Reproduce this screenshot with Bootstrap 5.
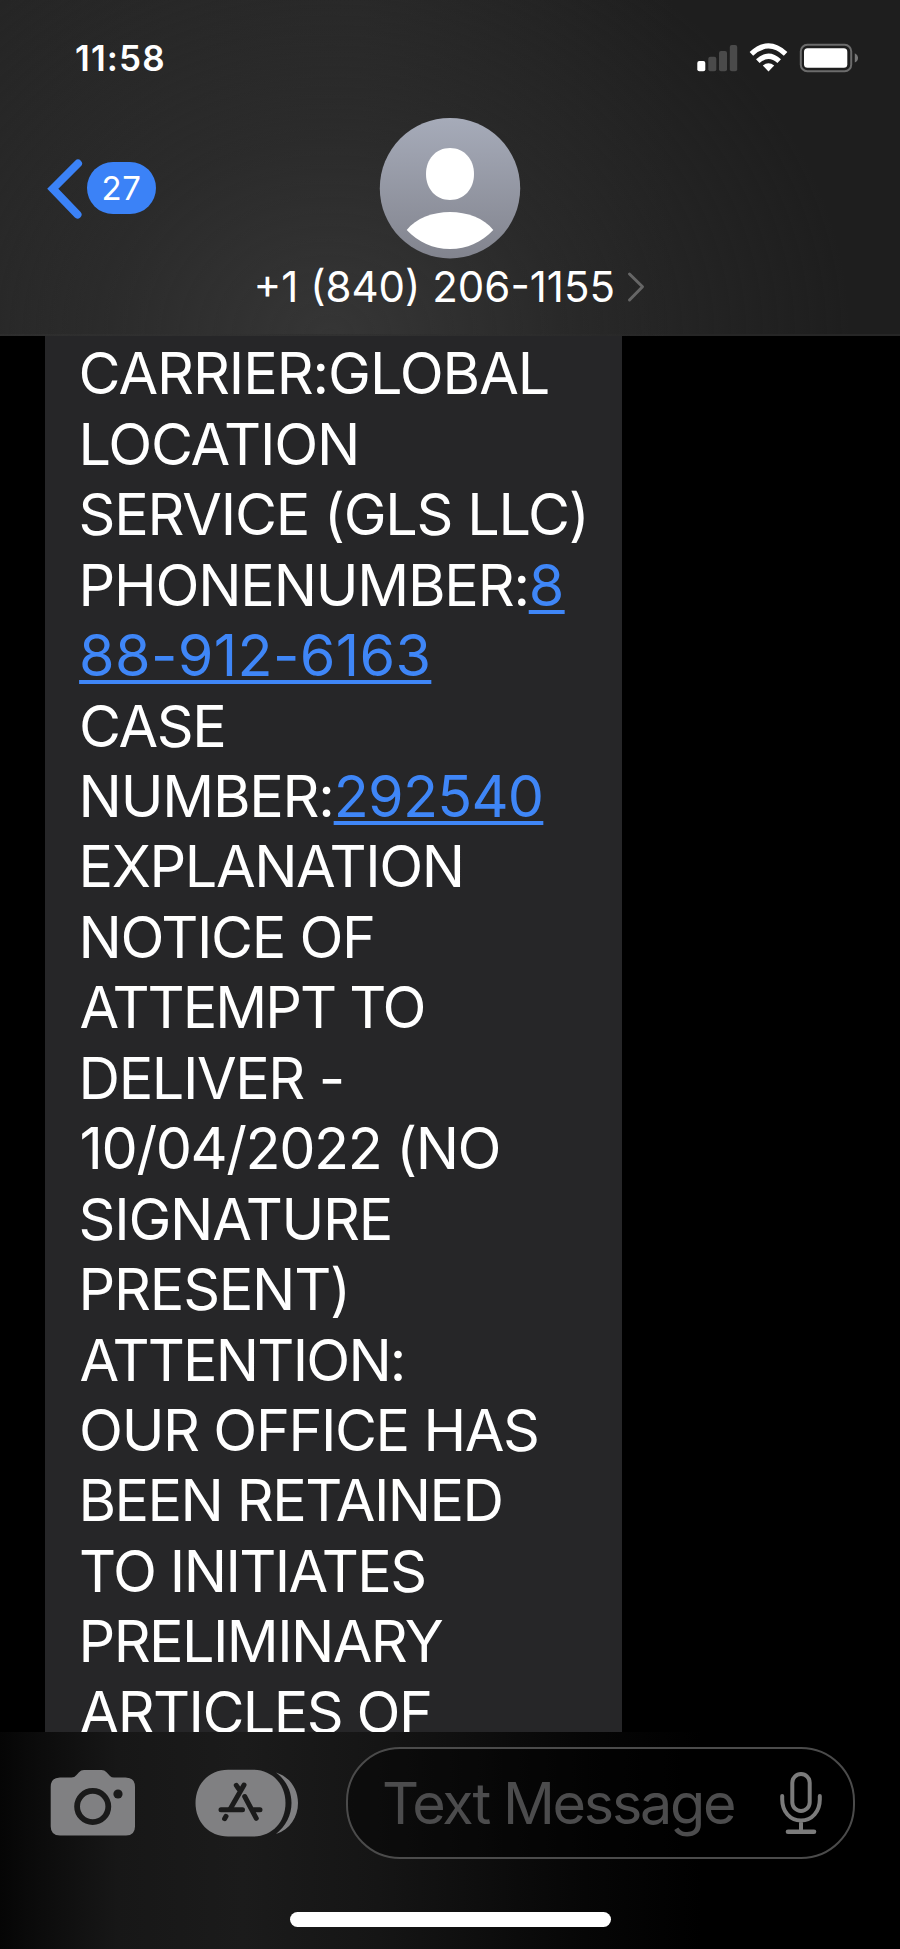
<!DOCTYPE html>
<html lang="en">
<head>
<meta charset="utf-8">
<meta name="viewport" content="width=device-width, initial-scale=1">
<title>Messages</title>
<link href="https://cdn.jsdelivr.net/npm/bootstrap@5.3.0/dist/css/bootstrap.min.css" rel="stylesheet">
<style>
  body { background: #000; color: #fff; font-family: Inter, "Liberation Sans", sans-serif; }
  .phone { width: 900px; height: 1949px; }
  svg { display: block; flex: none; }

  .top-bar {
    height: 336px;
    border-bottom: 2px solid rgba(255,255,255,.04);
    background:
      radial-gradient(ellipse 520px 440px at 330px 336px, rgba(54,54,54,.95), rgba(46,46,46,.6) 45%, rgba(30,30,30,0) 100%),
      linear-gradient(90deg, #252525, #272727 40%, #1e1e1e 75%, #1e1e1e);
  }
  .status-row { height: 117px; padding: 0 42px 2px 75px; }
  .clock { font-size: 35px; font-weight: 600; line-height: 42px; letter-spacing: 1.1px; }
  .head-grid { display: grid; grid-template-columns: 1fr 142px 1fr; height: 142px; padding: 0 45px; }
  .unread { width: 69px; height: 52px; border-radius: 26px; background: #3b82f7; font-size: 33px; line-height: 52px; letter-spacing: .6px; margin-left: 4px; }
  .contact { height: 56px; font-size: 42px; line-height: 56px; padding-left: 253.5px; }

  .thread { height: 1396px; }
  .bubble { width: 577px; margin-left: 45px; padding: 2.4px 0 0 33.6px; background: #262628; }
  .bubble p { font-size: 57.5px; line-height: 70.44px; letter-spacing: -1.25px; white-space: nowrap; margin: 0; }
  .bubble a { color: #3f86f7; letter-spacing: .35px; text-decoration: underline; text-decoration-thickness: 4px; text-underline-offset: 4px; text-decoration-skip-ink: none; }
  .bubble .t0 { letter-spacing: -1.08px; }
  .bubble .t1 { letter-spacing: -1.42px; }
  .bubble .t2 { letter-spacing: -1.6px; }
  .bubble .t3 { letter-spacing: -1.83px; }
  .bubble .t4 { letter-spacing: -1.99px; }
  .bubble .case-no { letter-spacing: -.75px; }
  .in1 { padding-left: .5px; }
  .in15 { padding-left: 1px; }

  .bottom-bar { height: 217px; background: linear-gradient(90deg, #050505, #0b0b0b 4%, #171717 13%, #1b1b1b 27%, #151515 42%, #0e0e0e 53%, #060606 65%, #000 78%); }
  .compose-row { height: 142px; padding: 0 45px 0 50px; }
  .app-icon { margin-left: 58px; }
  .field { width: 509.5px; height: 112px; border: 2.5px solid #4b4b4b; border-radius: 54px; background: rgba(0,0,0,.42); padding: 0 30px 0 34.5px; }
  .hint { color: #4c4c4d; font-size: 57.5px; line-height: 70px; letter-spacing: -2.28px; white-space: nowrap; }
  .home-line { width: 321px; height: 14.5px; border-radius: 8px; background: #fff; margin-top: 38px; margin-left: 290px; }
</style>
</head>
<body>
<div class="phone d-flex flex-column overflow-hidden">
  <header class="top-bar flex-shrink-0">
    <div class="status-row d-flex align-items-center justify-content-between">
      <span class="clock">11:58</span>
      <svg width="162" height="32" viewBox="696 41 162 32">
        <rect x="697.3" y="60" width="8" height="10.3" rx="2" fill="#fff"/>
        <g fill="#4a4a4a"><rect x="708.3" y="55.7" width="8" height="14.6" rx="2"/><rect x="719" y="50" width="8" height="20.3" rx="2"/><rect x="729.8" y="44" width="7.4" height="26.3" rx="2"/></g>
        <g fill="none" stroke="#fff" stroke-width="5.2">
          <path d="M751.4 52.8 Q768.5 37 785.600 52.8"/>
          <path d="M757.8 60.2 Q768.5 50.3 779.2 60.2"/>
        </g>
        <path d="M762.8 64.6 Q768.5 59.8 774.2 64.6 L768.5 70.4Z" fill="#fff"/>
        <rect x="800.8" y="43.8" width="50.4" height="26.4" rx="6.5" fill="none" stroke="#6c6c6c" stroke-width="2"/>
        <rect x="804" y="47.3" width="43.3" height="19.4" rx="3.5" fill="#fff"/>
        <path d="M854.8 52.3 Q858.2 54 858 57 Q858 60 854.8 61.6Z" fill="#777"/>
      </svg>
    </div>
    <div class="head-grid">
      <div class="d-flex align-items-center">
        <svg width="38" height="62" viewBox="45 157 38 62"><path d="M78 163.5 L52.8 188.7 L77.5 214.5" fill="none" stroke="#3b82f7" stroke-width="8" stroke-linecap="round" stroke-linejoin="miter"/></svg>
        <div class="unread text-center">27</div>
      </div>
      <svg width="142" height="142" viewBox="379 117 142 142">
        <defs><linearGradient id="avatarFill" x1="0" y1="0" x2="0" y2="1"><stop offset="0" stop-color="#a6abb9"/><stop offset="1" stop-color="#82848e"/></linearGradient></defs>
        <circle cx="450" cy="188.2" r="70.2" fill="url(#avatarFill)"/>
        <path d="M450 148C464 148 474 159 474 174S464 200 450 200S426 189 426 174S436 148 450 148Z" fill="#fff"/>
        <path d="M406.700 230 C416 218 433 212 450 212 S484 218 493.300 230 C482 242 467 249 450 249 S418 242 406.700 230Z" fill="#fff"/>
      </svg>
    </div>
    <div class="contact d-flex align-items-center">
      <span>+1 (840) 206-1155</span>
      <svg class="ms-2" width="28" height="34" viewBox="623 270 28 34"><path d="M629.500 274 L642.500 286.800 L629.500 300" fill="none" stroke="#666" stroke-width="3" stroke-linecap="round" stroke-linejoin="round"/></svg>
    </div>
  </header>

  <main class="thread overflow-hidden flex-shrink-0">
    <div class="bubble h-100 overflow-hidden">
      <p class="t0">CARRIER:GLOBAL</p>
      <p>LOCATION</p>
      <p>SERVICE (GLS LLC)</p>
      <p>PHONENUMBER:<a href="#">8</a></p>
      <p class="in1"><a href="#">88-912-6163</a></p>
      <p class="t1 in1">CASE</p>
      <p>NUMBER:<a class="case-no" href="#">292540</a></p>
      <p class="t1">EXPLANATION</p>
      <p class="t1">NOTICE OF</p>
      <p class="t4 in15">ATTEMPT TO</p>
      <p class="t1">DELIVER -</p>
      <p class="t1 in15">10/04/2022 (NO</p>
      <p>SIGNATURE</p>
      <p>PRESENT)</p>
      <p class="t3 in15">ATTENTION:</p>
      <p class="t1 in1">OUR OFFICE HAS</p>
      <p class="t2">BEEN RETAINED</p>
      <p class="t2 in1">TO INITIATES</p>
      <p class="t2">PRELIMINARY</p>
      <p class="t2 in15">ARTICLES OF</p>
    </div>
  </main>

  <footer class="bottom-bar flex-shrink-0">
    <div class="compose-row d-flex align-items-center">
      <svg width="86" height="68" viewBox="50 1770 86 68">
        <path d="M60 1778.5H71.5Q74.500 1778.5 76.500 1776L79 1773.200Q81 1771 84 1771H101.500Q104.500 1771 106.500 1773.200L110 1777Q111.500 1778.500 114 1778.500H125.500Q135 1778.500 135 1788V1827.500Q135 1836.500 126 1836.500H60Q50.700 1836.500 50.700 1827.500V1788Q50.700 1778.500 60 1778.500Z" fill="#808082"/>
        <circle cx="92.700" cy="1807.500" r="15.600" fill="none" stroke="#1a1a1a" stroke-width="5.800"/>
        <circle cx="118" cy="1795" r="4.600" fill="#1a1a1a"/>
      </svg>
      <svg class="app-icon" width="106" height="70" viewBox="194 1769 106 70">
        <path d="M276 1773.500 C290 1778 298 1790 298 1804 S290 1830.500 276 1835 C286 1827 291.500 1816 291.500 1804 S286 1781 276 1773.500Z" fill="#808082"/>
        <path d="M228 1770.700H253C272 1770.700 285.500 1785 285.500 1804S272 1837.500 253 1837.500H228C209 1837.500 195.500 1823 195.500 1804S209 1770.700 228 1770.700Z" fill="#808082"/>
        <g stroke="#1b1b1b" stroke-width="5" stroke-linecap="round" fill="none">
          <path d="M236.300 1786.300 L238.500 1789.500"/>
          <path d="M244 1786 L230.500 1809.500"/>
          <path d="M221 1810.800H242.500 M254 1810.800H260"/>
          <path d="M226 1817.300L224.600 1819.700"/>
          <path d="M244.700 1797.500L256.300 1819.300"/>
        </g>
      </svg>
      <div class="field d-flex align-items-center justify-content-between ms-auto">
        <span class="hint">Text Message</span>
        <svg width="44" height="64" viewBox="780 1771 44 64">
          <g fill="none" stroke="#7b7b7b" stroke-width="4" stroke-linecap="round">
            <rect x="793.300" y="1774" width="17.400" height="37" rx="8.700"/>
            <path d="M783.200 1796V1799.500C783.200 1811.500 791 1820.500 802 1820.500S820.800 1811.500 820.800 1799.500V1796M802 1821V1831"/>
            <path d="M789 1831.700H815" stroke-width="4.600"/>
          </g>
        </svg>
      </div>
    </div>
    <div class="home-line"></div>
  </footer>
</div>
<script src="https://cdn.jsdelivr.net/npm/bootstrap@5.3.0/dist/js/bootstrap.bundle.min.js"></script>
</body>
</html>
